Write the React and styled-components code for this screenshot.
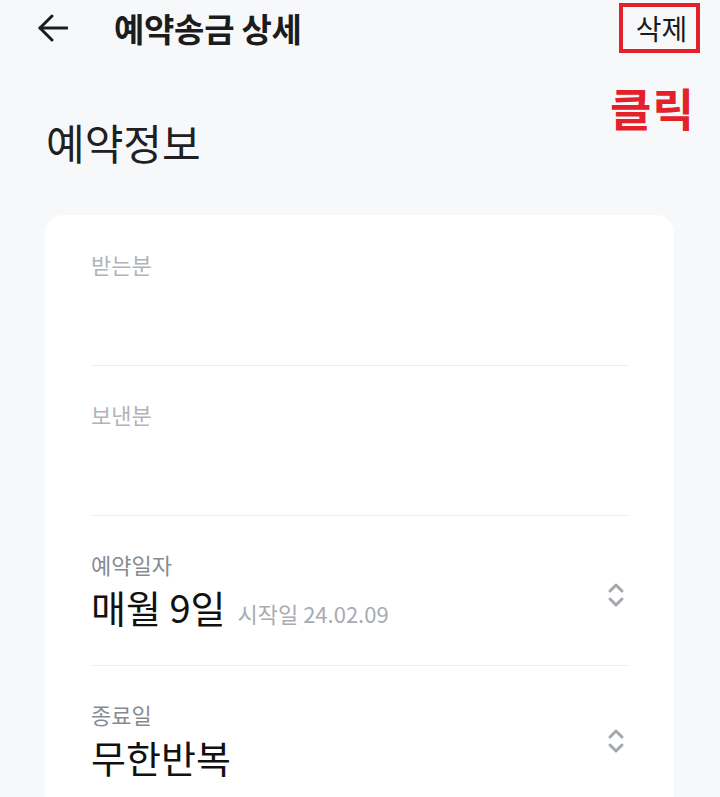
import React from 'react'
import styled, { createGlobalStyle } from 'styled-components'

const GlobalStyle = createGlobalStyle`
    html, body {
        margin: 0;
        padding: 0;
        background: #f7f8fa;
        overflow: hidden;
    }
    body {
        font-family: "Noto Sans CJK KR", "Noto Sans", sans-serif;
        color: #1b1c1e;
    }
`;

const Page = styled.div`
    width: 720px;
    height: 797px;
    position: relative;
    background: #f7f8fa;
`;

const Header = styled.header`
    height: 56px;
    display: flex;
    align-items: center;
    padding: 0 20px 0 38px;
`;

const BackButton = styled.button`
    border: 0;
    background: none;
    padding: 0;
    width: 30px;
    height: 28px;
    display: flex;
    align-items: center;
    color: #1b1c1e;
`;

const Title = styled.h1`
    margin: 0 0 0 46px;
    font-size: 33px;
    font-weight: 700;
    letter-spacing: -0.3px;
    flex: 1;
`;

const DeleteButton = styled.button`
    box-sizing: border-box;
    width: 81px;
    height: 50px;
    border: 4px solid #e3212b;
    background: none;
    font-family: inherit;
    font-size: 28px;
    color: #1b1c1e;
    padding: 0 0 0 4px;
    display: flex;
    align-items: center;
    justify-content: center;
`;

const ClickNote = styled.span`
    position: absolute;
    top: 85px;
    left: 610px;
    font-size: 45px;
    line-height: 1;
    font-weight: 700;
    letter-spacing: 1px;
    color: #e3212b;
`;

const SectionTitle = styled.h2`
    margin: 58px 0 0 46px;
    font-size: 42px;
    line-height: 56px;
    font-weight: 400;
    color: #1f2022;
`;

const Card = styled.div`
    margin: 45px 46px 0 45px;
    background: #fff;
    border-radius: 18px;
    padding: 1px 45px 0 46px;
`;

const Row = styled.div`
    height: 150px;
    box-sizing: border-box;
    padding-top: 33px;
    display: flex;
    align-items: flex-start;
    border-bottom: 1px solid #ebedf0;
    &:last-child {
        border-bottom: 0;
    }
`;

const RowBody = styled.div`
    flex: 1;
    display: flex;
    align-items: center;
`;

const Fields = styled.div`
    flex: 1;
`;

const Label = styled.div`
    font-size: 22px;
    line-height: 31px;
    color: ${p => (p.$muted ? '#b0b4ba' : '#868b91')};
`;

const Value = styled.div`
    font-size: 38px;
    line-height: 53px;
    color: #111;
    display: flex;
    align-items: baseline;
`;

const Sub = styled.span`
    margin-left: 12px;
    font-size: 22px;
    color: #a8acb2;
`;

const Stepper = styled.svg`
    width: 18px;
    height: 26px;
    margin-right: 4px;
`;

const ArrowLeft = () => (
    <svg width="30" height="28" viewBox="0 0 30 28" fill="none" stroke="currentColor" strokeWidth="3" strokeLinecap="round" strokeLinejoin="round">
        <path d="M2 14H29" />
        <path d="M14 2L2 14L14 26" />
    </svg>
)

const UpDown = () => (
    <Stepper viewBox="0 0 18 26" fill="none" stroke="#a3a8ae" strokeWidth="3" strokeLinecap="round" strokeLinejoin="round">
        <path d="M3 9L9 3L15 9" />
        <path d="M3 17L9 23L15 17" />
    </Stepper>
)

const rows = [
    { label: '받는분', muted: true },
    { label: '보낸분', muted: true },
    { label: '예약일자', value: '매월 9일', sub: '시작일 24.02.09', stepper: true },
    { label: '종료일', value: '무한반복', stepper: true },
]

const App = () => (
    <Page>
        <GlobalStyle />
        <Header>
            <BackButton aria-label="뒤로">
                <ArrowLeft />
            </BackButton>
            <Title>예약송금 상세</Title>
            <DeleteButton>삭제</DeleteButton>
        </Header>
        <ClickNote>클릭</ClickNote>
        <SectionTitle>예약정보</SectionTitle>
        <Card>
            {rows.map((row, index) => (
                <Row key={index}>
                    <RowBody>
                        <Fields>
                            <Label $muted={row.muted}>{row.label}</Label>
                            {row.value && (
                                <Value>
                                    {row.value}
                                    {row.sub && <Sub>{row.sub}</Sub>}
                                </Value>
                            )}
                        </Fields>
                        {row.stepper && <UpDown />}
                    </RowBody>
                </Row>
            ))}
        </Card>
    </Page>
)

export default App
